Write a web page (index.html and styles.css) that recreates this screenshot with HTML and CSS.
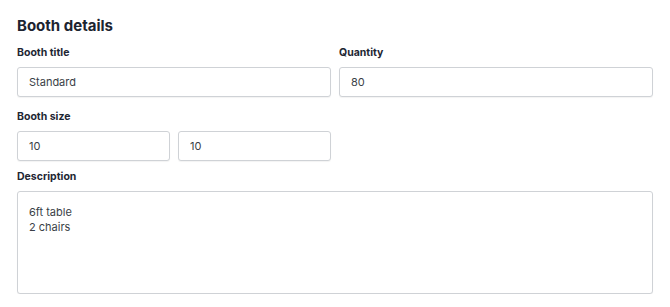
FILE: index.html
```html
<!DOCTYPE html>
<html lang="en">
<head>
    <meta charset="UTF-8">
    <meta name="viewport" content="width=device-width, initial-scale=1.0">
    <title>Booth details</title>
    <link rel="stylesheet" href="styles.css">
</head>
<body>
    <div class="booth-form">
        <h2>Booth details</h2>
        <div class="row">
            <div class="field">
                <label for="boothTitle">Booth title</label>
                <input id="boothTitle" type="text" value="Standard">
            </div>
            <div class="field">
                <label for="quantity">Quantity</label>
                <input id="quantity" type="text" value="80">
            </div>
        </div>
        <div class="row size-row">
            <div class="field">
                <label for="sizeW">Booth size</label>
                <div class="size-pair">
                    <input id="sizeW" type="text" value="10">
                    <input id="sizeH" type="text" value="10">
                </div>
            </div>
        </div>
        <div class="field desc-field">
            <label for="description">Description</label>
            <textarea id="description">6ft table
2 chairs</textarea>
        </div>
    </div>
</body>
</html>
```

FILE: styles.css
```css
body {
    margin: 0;
    background: #ffffff;
    font-family: Inter, "Noto Sans", sans-serif;
    color: #1e2633;
}
.booth-form {
    width: 636px;
    padding: 16px 17px 0 17px;
}
h2 {
    margin: 0 0 10px 0;
    font-size: 15px;
    line-height: 20px;
    font-weight: 700;
    color: #1c2430;
}
.row {
    display: grid;
    grid-template-columns: 1fr 1fr;
    gap: 8px;
    margin-bottom: 13px;
}
.size-row {
    margin-bottom: 9px;
}
.field {
    display: flex;
    flex-direction: column;
}
label {
    font-size: 10.5px;
    line-height: 14px;
    font-weight: 700;
    color: #1e2633;
    margin-bottom: 7px;
}
input, textarea {
    box-sizing: border-box;
    font-family: Inter, "Noto Sans", sans-serif;
    font-size: 11px;
    color: #3a3f47;
    border: 1px solid #cfd2d6;
    border-radius: 3px;
    background: #fff;
    box-shadow: 0 1px 1px rgba(0, 0, 0, 0.05);
    outline: none;
}
input {
    height: 30px;
    padding: 0 11px;
    width: 100%;
}
.size-pair {
    display: grid;
    grid-template-columns: 1fr 1fr;
    gap: 8px;
}
textarea {
    width: 100%;
    height: 103px;
    padding: 13px 11px;
    line-height: 15px;
    resize: none;
}
```
